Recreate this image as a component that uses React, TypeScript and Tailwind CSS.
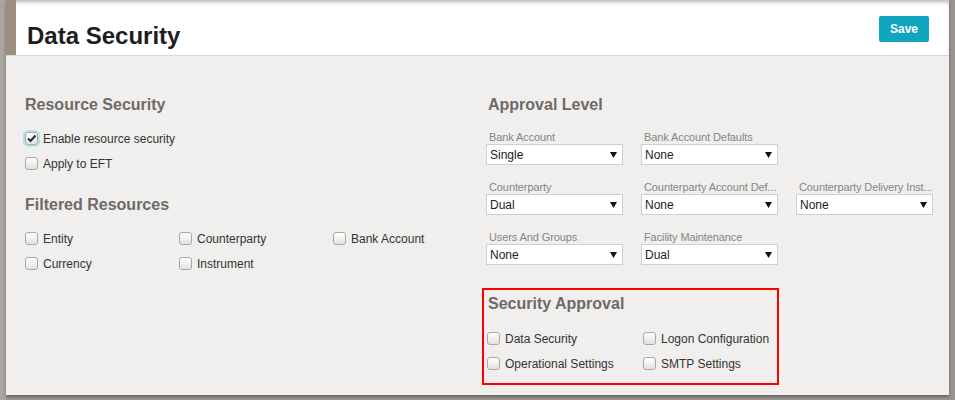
import React from "react";

const font = "font-['Liberation_Sans',Arial,Helvetica,sans-serif]";

function Check({ checked = false }: { checked?: boolean }) {
  return (
    <span
      className={
        "flex h-[13px] w-[13px] shrink-0 items-center justify-center rounded-[3px] border border-[#a8a8a8] bg-gradient-to-b from-white to-[#e2e2e2] " +
        (checked ? "shadow-[0_0_0_2px_#b5e1ee]" : "")
      }
    >
      {checked && (
        <svg width="11" height="11" viewBox="0 0 11 11">
          <path d="M2 5.5 L4.5 8 L9.5 2.5" fill="none" stroke="#2b2b2b" strokeWidth="2" />
        </svg>
      )}
    </span>
  );
}

function CheckRow({ label, checked }: { label: string; checked?: boolean }) {
  return (
    <div className="flex h-[25px] items-center gap-[5px] text-[12px] text-[#333]">
      <Check checked={checked} />
      <span>{label}</span>
    </div>
  );
}

function Heading({ children }: { children: React.ReactNode }) {
  return <h2 className="text-[16px] font-bold leading-[20px] text-[#6f6a66]">{children}</h2>;
}

function Select({ label, value }: { label: string; value: string }) {
  return (
    <div className="w-[137px]">
      <div className="whitespace-nowrap pl-[3px] text-[11px] leading-[13px] tracking-[-0.1px] text-[#858585]">{label}</div>
      <div className="flex h-[21px] items-center justify-between border border-[#cfcfcf] bg-white pl-[3px] pr-[5px] text-[12px] text-[#222]">
        <span>{value}</span>
        <svg width="7" height="6" viewBox="0 0 7 6">
          <path d="M0 0 H7 L3.5 6 Z" fill="#111" />
        </svg>
      </div>
    </div>
  );
}

export default function App() {
  return (
    <div className={`flex h-[400px] w-[955px] bg-[#9a958f] ${font}`}>
      <div className="w-[6px] bg-[#a9a59f]" />
      <div className="flex h-[395px] w-[943px] flex-col shadow-[0_2px_3px_rgba(0,0,0,0.35)]">
        <header className="flex h-[56px] border-b border-[#d9d9d9] bg-white shadow-[inset_0_4px_4px_-2px_rgba(0,0,0,0.3)]">
          <div className="w-[10px] bg-[#9d8d7f]" />
          <div className="flex flex-1 items-start justify-between pl-[11px] pr-[20px]">
            <h1 className="mt-[24px] text-[24px] font-bold leading-[24px] text-[#1e1e1e]">Data Security</h1>
            <button className="mt-[16px] h-[26px] w-[50px] rounded-[2px] bg-[#10a6bf] text-[12px] font-bold text-white">
              Save
            </button>
          </div>
        </header>

        <main className="flex flex-1 bg-[#f0efed] pl-[19px] pt-[39px]">
          <section className="w-[461px]">
            <Heading>Resource Security</Heading>
            <div className="mt-[11px]">
              <CheckRow label="Enable resource security" checked />
              <CheckRow label="Apply to EFT" />
            </div>
            <div className="mt-[19px]">
              <Heading>Filtered Resources</Heading>
            </div>
            <div className="mt-[11px] grid grid-cols-[154px_154px_154px]">
              <CheckRow label="Entity" />
              <CheckRow label="Counterparty" />
              <CheckRow label="Bank Account" />
              <CheckRow label="Currency" />
              <CheckRow label="Instrument" />
            </div>
          </section>

          <section>
            <div className="pl-[2px]">
              <Heading>Approval Level</Heading>
            </div>
            <div className="mt-[16px] flex flex-col gap-[16px]">
              <div className="flex gap-[18px]">
                <Select label="Bank Account" value="Single" />
                <Select label="Bank Account Defaults" value="None" />
              </div>
              <div className="flex gap-[18px]">
                <Select label="Counterparty" value="Dual" />
                <Select label="Counterparty Account Def..." value="None" />
                <Select label="Counterparty Delivery Inst..." value="None" />
              </div>
              <div className="flex gap-[18px]">
                <Select label="Users And Groups" value="None" />
                <Select label="Facility Maintenance" value="Dual" />
              </div>
            </div>

            <div className="-ml-[4px] mt-[23px] w-[297px] border-2 border-[#ff0000] pb-[7px] pl-[3px] pt-[4px]">
              <div className="pl-[1px]">
                <Heading>Security Approval</Heading>
              </div>
              <div className="mt-[12px] grid grid-cols-[156px_130px]">
                <CheckRow label="Data Security" />
                <CheckRow label="Logon Configuration" />
                <CheckRow label="Operational Settings" />
                <CheckRow label="SMTP Settings" />
              </div>
            </div>
          </section>
        </main>
      </div>
    </div>
  );
}
